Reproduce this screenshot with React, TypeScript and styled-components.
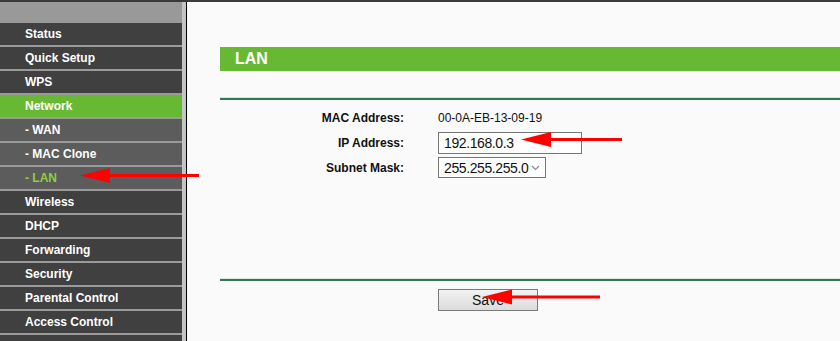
import React from "react";
import styled, { createGlobalStyle } from "styled-components";

const GlobalStyle = createGlobalStyle`
  html, body {
    margin: 0;
    padding: 0;
    background: #fafafa;
    overflow: hidden;
    font-family: "Liberation Sans", Arial, sans-serif;
  }
`;

type MenuItem = {
  label: string;
  kind: "main" | "active" | "sub" | "subActive";
};

const menu: MenuItem[] = [
  { label: "Status", kind: "main" },
  { label: "Quick Setup", kind: "main" },
  { label: "WPS", kind: "main" },
  { label: "Network", kind: "active" },
  { label: "- WAN", kind: "sub" },
  { label: "- MAC Clone", kind: "sub" },
  { label: "- LAN", kind: "subActive" },
  { label: "Wireless", kind: "main" },
  { label: "DHCP", kind: "main" },
  { label: "Forwarding", kind: "main" },
  { label: "Security", kind: "main" },
  { label: "Parental Control", kind: "main" },
  { label: "Access Control", kind: "main" },
  { label: "", kind: "main" },
];

const Page = styled.div`
  position: relative;
  display: flex;
  height: 341px;
  border-top: 2px solid #3a3a3a;
  box-sizing: border-box;
`;

const Sidebar = styled.nav`
  width: 182px;
  flex-shrink: 0;
  background: #444;
  border-right: 4px solid #c4c4c4;
  display: flex;
  flex-direction: column;
  overflow: hidden;
`;

const SideHeader = styled.div`
  height: 21px;
  background: #999;
  flex-shrink: 0;
`;

const itemBg = {
  main: "#404040",
  active: "#67b934",
  sub: "#5c5c5c",
  subActive: "#5c5c5c",
};

const MenuRow = styled.div<{ $kind: MenuItem["kind"] }>`
  height: 22px;
  flex-shrink: 0;
  line-height: 22px;
  padding-left: 25px;
  border-bottom: 2px solid #9a9a9a;
  background: ${(p) => itemBg[p.$kind]};
  color: ${(p) => (p.$kind === "subActive" ? "#8fd03e" : "#fff")};
  font-size: 12px;
  font-weight: bold;
  white-space: nowrap;
`;

const Content = styled.main`
  flex: 1;
  border-left: 1px solid #000;
  padding: 45px 0 0 33px;
  min-width: 0;
  overflow: hidden;
`;

const Panel = styled.section`
  width: 680px;
`;

const TitleBar = styled.h1`
  margin: 0;
  height: 24px;
  line-height: 24px;
  background: #67b934;
  color: #fff;
  font-size: 16px;
  font-weight: bold;
  padding-left: 15px;
`;

const Rule = styled.div<{ $top: number }>`
  margin-top: ${(p) => p.$top}px;
  height: 2px;
  background: #2f7b50;
  border-top: 1px solid #e2e2e2;
`;

const Form = styled.div`
  display: grid;
  grid-template-columns: 184px auto;
  grid-auto-rows: 25px;
  column-gap: 34px;
  align-items: center;
  margin-top: 5px;
`;

const Label = styled.span`
  text-align: right;
  font-size: 12px;
  font-weight: bold;
  color: #111;
`;

const Value = styled.span`
  font-size: 12px;
  color: #111;
`;

const Field = styled.div<{ $width: number; $height: number }>`
  width: ${(p) => p.$width}px;
  height: ${(p) => p.$height}px;
  box-sizing: border-box;
  border: 1px solid #767676;
  background: #fff;
  font-size: 14px;
  letter-spacing: -0.4px;
  color: #111;
  display: flex;
  align-items: center;
  justify-content: space-between;
  padding: 0 5px 0 5px;
`;

const Footer = styled.div`
  padding: 8px 0 0 218px;
`;

const Button = styled.button`
  width: 100px;
  height: 22px;
  border: 1px solid #7a7a7a;
  background: linear-gradient(#f2f2f2, #dcdcdc);
  font-family: "Liberation Sans", Arial, sans-serif;
  font-size: 14px;
  color: #111;
  padding: 0;
`;

const Overlay = styled.svg`
  position: absolute;
  left: 0;
  top: -2px;
  pointer-events: none;
`;

type Arrow = { tip: number; tail: number; y: number };
const arrows: Arrow[] = [
  { tip: 80, tail: 199, y: 175.5 },
  { tip: 521, tail: 622, y: 139.5 },
  { tip: 482, tail: 600, y: 297 },
];

export default function App() {
  return (
    <>
      <GlobalStyle />
      <Page>
        <Sidebar>
          <SideHeader />
          {menu.map((m, i) => (
            <MenuRow key={i} $kind={m.kind}>
              {m.label}
            </MenuRow>
          ))}
        </Sidebar>
        <Content>
          <Panel>
            <TitleBar>LAN</TitleBar>
            <Rule $top={26} />
            <Form>
              <Label>MAC Address:</Label>
              <Value>00-0A-EB-13-09-19</Value>
              <Label>IP Address:</Label>
              <Field $width={144} $height={22}>192.168.0.3</Field>
              <Label>Subnet Mask:</Label>
              <Field $width={108} $height={21}>
                255.255.255.0
                <svg width="9" height="6" viewBox="0 0 9 6">
                  <path d="M1 1l3.5 3.5L8 1" fill="none" stroke="#8a8a8a" strokeWidth="1.2" />
                </svg>
              </Field>
            </Form>
            <Rule $top={98} />
            <Footer>
              <Button>Save</Button>
            </Footer>
          </Panel>
        </Content>
        <Overlay width="840" height="341" viewBox="0 0 840 341">
          {arrows.map((a, i) => (
            <g key={i} fill="#ff0000">
              <rect x={a.tip + 20} y={a.y - 1.5} width={a.tail - a.tip - 20} height={3} />
              <polygon points={`${a.tip},${a.y} ${a.tip + 30},${a.y - 7.5} ${a.tip + 30},${a.y + 7.5}`} />
            </g>
          ))}
        </Overlay>
      </Page>
    </>
  );
}
